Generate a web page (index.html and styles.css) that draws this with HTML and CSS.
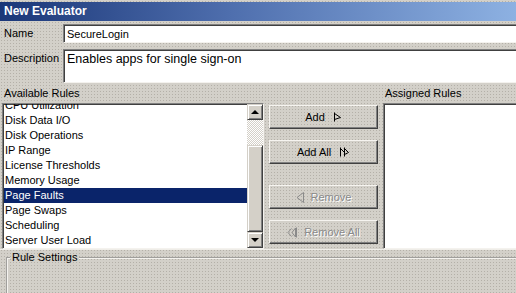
FILE: index.html
```html
<!DOCTYPE html>
<html lang="en">
<head>
    <meta charset="UTF-8">
    <title>New Evaluator</title>
    <link rel="stylesheet" href="styles.css">
</head>
<body>
    <!-- title -->
    <div class="titlebar">New Evaluator</div>

    <!-- name / description -->
    <div class="field-row name-row">
        <label class="field-label">Name</label>
        <div class="input">SecureLogin</div>
    </div>
    <div class="field-row desc-row">
        <label class="field-label">Description</label>
        <div class="input textarea">Enables apps for single sign-on</div>
    </div>

    <!-- rules -->
    <div class="rules">
        <div class="rule-col available">
            <div class="col-label">Available Rules</div>
            <div class="listbox">
                <ul class="items">
                    <li>CPU Utilization</li>
                    <li>Disk Data I/O</li>
                    <li>Disk Operations</li>
                    <li>IP Range</li>
                    <li>License Thresholds</li>
                    <li>Memory Usage</li>
                    <li class="selected">Page Faults</li>
                    <li>Page Swaps</li>
                    <li>Scheduling</li>
                    <li>Server User Load</li>
                </ul>
                <div class="scrollbar">
                    <div class="sb-btn"><span class="arrow up"></span></div>
                    <div class="sb-track"></div>
                    <div class="sb-thumb"></div>
                    <div class="sb-btn"><span class="arrow down"></span></div>
                </div>
            </div>
        </div>

        <div class="buttons">
            <div class="btn add">
                <span>Add</span>
                <svg width="9" height="10" viewBox="0 0 9 10"><path d="M1.5 0.5V9.5M1.5 1.5L7.5 5.5L1.5 7.5" fill="none" stroke="#000" stroke-width="1"/></svg>
            </div>
            <div class="btn add-all">
                <span>Add All</span>
                <svg width="11" height="10" viewBox="0 0 11 10"><path d="M1.5 0.5V9.5M1.5 1.5L5.5 5.5M5.5 0.5V9.5M5.5 1.5L9.5 5.5L5.5 7.5" fill="none" stroke="#000" stroke-width="1"/></svg>
            </div>
            <div class="btn remove disabled">
                <svg width="9" height="11" viewBox="0 0 9 11"><path d="M7.5 0.5V10.5L1 5.5Z" fill="none" stroke="#8a8a8a" stroke-width="1"/></svg>
                <span>Remove</span>
            </div>
            <div class="btn remove-all disabled">
                <svg width="11" height="11" viewBox="0 0 11 11"><path d="M4.5 1.5L1 5.5L4.5 9.5M8.5 1L5 5.5L8.5 10ZM9.5 0.5V10.5" fill="none" stroke="#8a8a8a" stroke-width="1"/></svg>
                <span>Remove All</span>
            </div>
        </div>

        <div class="rule-col assigned">
            <div class="col-label">Assigned Rules</div>
            <div class="listbox empty"></div>
        </div>
    </div>

    <!-- settings -->
    <fieldset class="settings">
        <legend>Rule Settings</legend>
    </fieldset>
</body>
</html>
```

FILE: styles.css
```css
body {
    margin: 0;
    width: 516px;
    height: 293px;
    overflow: hidden;
    font-family: "Liberation Sans", Arial, sans-serif;
    font-size: 11px;
    color: #000;
    background-color: #d3d0c9;
    background-image: radial-gradient(circle, #b4b0a8 0.6px, transparent 0.9px);
    background-size: 3px 3px;
}

/* title */
.titlebar {
    margin-top: 2px;
    height: 19px;
    line-height: 19px;
    padding-left: 4px;
    color: #fff;
    font-weight: bold;
    font-size: 12px;
    background: linear-gradient(to right, #1b3778, #4f6fae 45%, #8db1e2);
}

/* fields */
.field-row {
    display: flex;
    padding-left: 4px;
}
.name-row {
    margin-top: 3px;
}
.desc-row {
    margin-top: 6px;
}
.field-label {
    width: 59px;
    padding-top: 3px;
    flex-shrink: 0;
}
.input {
    width: 520px;
    flex-shrink: 0;
    height: 19px;
    box-sizing: border-box;
    background: #fff;
    border-top: 1px solid #808080;
    border-left: 1px solid #808080;
    border-bottom: 1px solid #f4f2ee;
    box-shadow: inset 1px 1px 0 #404040;
    padding: 3px 0 0 3px;
    white-space: nowrap;
}
.textarea {
    height: 34px;
    font-size: 12.5px;
    padding-top: 2px;
}

/* rules */
.rules {
    display: flex;
    gap: 5px;
    padding-left: 2px;
    height: 166px;
    border-bottom: 1px solid #efede8;
}
.rule-col {
    display: flex;
    flex-direction: column;
    flex-shrink: 0;
}
.col-label {
    height: 20px;
    line-height: 14px;
    padding: 3px 0 0 2px;
    box-sizing: border-box;
}
.available {
    width: 262px;
}
.assigned {
    width: 140px;
}

.listbox {
    height: 146px;
    box-sizing: border-box;
    display: flex;
    background: #fff;
    border-top: 1px solid #808080;
    border-left: 1px solid #808080;
    border-bottom: 1px solid #f4f2ee;
    border-right: 1px solid #f4f2ee;
    box-shadow: inset 1px 1px 0 #404040;
    overflow: hidden;
}
.listbox.empty {
    border-right: none;
}

.items {
    list-style: none;
    margin: -6px 0 0 1px;
    padding: 0;
    flex: 1;
}
.items li {
    height: 15px;
    line-height: 15px;
    padding-left: 1px;
    white-space: nowrap;
}
.items li.selected {
    background: #0a246a;
    color: #fff;
}

/* scrollbar */
.scrollbar {
    width: 16px;
    display: flex;
    flex-direction: column;
}
.sb-btn, .sb-thumb {
    box-sizing: border-box;
    background: #d4d0c8;
    border: 1px solid;
    border-color: #d4d0c8 #404040 #404040 #d4d0c8;
    box-shadow: inset 1px 1px 0 #fff, inset -1px -1px 0 #808080;
}
.sb-btn {
    height: 16px;
    display: flex;
    align-items: center;
    justify-content: center;
}
.sb-track {
    height: 25px;
    background-image: conic-gradient(#fff 25%, #d4d0c8 0 50%, #fff 0 75%, #d4d0c8 0);
    background-size: 2px 2px;
}
.sb-thumb {
    flex: 1;
}
.arrow {
    width: 0;
    height: 0;
    border-left: 4px solid transparent;
    border-right: 4px solid transparent;
}
.arrow.up {
    border-bottom: 4px solid #000;
}
.arrow.down {
    border-top: 4px solid #000;
}

/* buttons */
.buttons {
    width: 109px;
    padding-top: 22px;
    display: flex;
    flex-direction: column;
    flex-shrink: 0;
}
.btn {
    height: 24px;
    box-sizing: border-box;
    display: flex;
    align-items: center;
    justify-content: center;
    gap: 8px;
    border-top: 1px solid #f6f4f0;
    border-left: 1px solid #f6f4f0;
    border-right: 1px solid #404040;
    border-bottom: 1px solid #404040;
    box-shadow: inset -1px -1px 0 #808080;
}
.add-all {
    margin-top: 11px;
}
.remove {
    margin-top: 21px;
    gap: 6px;
}
.remove-all {
    margin-top: 11px;
    gap: 6px;
}
.btn.disabled {
    color: #8a8a8a;
    text-shadow: 1px 1px 0 #fff;
}

/* settings */
.settings {
    margin: 1px 0 0 6px;
    padding: 0;
    height: 60px;
    border: 2px groove #f4f2ee;
    border-right: none;
}
.settings legend {
    margin-left: 2px;
    padding: 0 2px;
    line-height: 13px;
}
```
